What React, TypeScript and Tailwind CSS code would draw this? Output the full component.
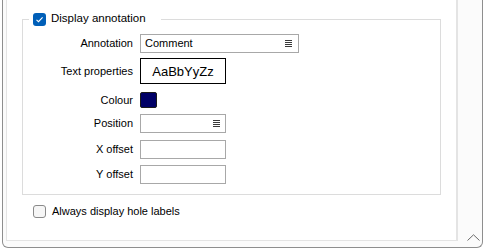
import React from "react";

function MenuIcon() {
  return (
    <svg width="7" height="7" viewBox="0 0 7 7" className="block">
      <path d="M0 0.5H7M0 2.5H7M0 4.5H7M0 6.5H7" stroke="#3a3a3a" strokeWidth="1" />
    </svg>
  );
}

function CheckBox({ checked }: { checked: boolean }) {
  if (checked) {
    return (
      <div className="w-[13px] h-[13px] rounded-[3px] bg-[#005fb8] flex items-center justify-center">
        <svg width="9" height="9" viewBox="0 0 9 9">
          <path d="M1.5 4.8L3.5 6.7L7.6 2.3" fill="none" stroke="white" strokeWidth="1.1" />
        </svg>
      </div>
    );
  }
  return <div className="w-[13px] h-[13px] rounded-[3px] border border-[#8a8a8a] bg-[#f6f6f6]" />;
}

function Row({ label, children, cls }: { label: string; children: React.ReactNode; cls: string }) {
  return (
    <div className={"flex items-center " + cls}>
      <div className="w-[110px] text-right">{label}</div>
      <div className="ml-[7px] flex items-center">{children}</div>
    </div>
  );
}

export default function App() {
  return (
    <div className="w-[485px] h-[249px] bg-white overflow-hidden font-['Liberation_Sans',Arial,sans-serif] text-[11px] text-black leading-none">
      <div className="ml-[2px] w-[481px] h-[248px] border-x border-b border-[#8e8e8e] rounded-b-[6px] flex pb-[6px] pl-[3px] bg-[#fbfbfb]">
        <div className="w-[452px] h-full border-l border-b border-r-[2px] border-[#e4e4e4] bg-white flex flex-col">
          <fieldset className="ml-[15px] mt-[12px] w-[419px] border border-[#dcdcdc] pb-[10px] pt-[8px]">
            <legend className="ml-[6px] pl-[4px] pr-[15px] h-[14px] flex items-center gap-[5px]">
              <CheckBox checked={true} />
              <span className="text-[11.5px]">Display annotation</span>
            </legend>
            <Row label="Annotation" cls="h-[19px]">
              <div className="w-[159px] h-[19px] border border-[#a8a8a8] flex items-center pl-[4px] pr-[6px] justify-between">
                <span>Comment</span>
                <MenuIcon />
              </div>
            </Row>
            <Row label="Text properties" cls="h-[26px] mt-[5px]">
              <div className="w-[86px] h-[26px] border border-black flex items-center justify-center text-[13px]">
                AaBbYyZz
              </div>
            </Row>
            <Row label="Colour" cls="h-[16px] mt-[8px]">
              <div className="w-[17px] h-[16px] rounded-[2px] border border-[#1a1a1a] bg-[#000066]" />
            </Row>
            <Row label="Position" cls="h-[19px] mt-[6px]">
              <div className="w-[86px] h-[19px] border border-[#a8a8a8] flex items-center justify-end pr-[5px]">
                <MenuIcon />
              </div>
            </Row>
            <Row label="X offset" cls="h-[19px] mt-[7px]">
              <div className="w-[86px] h-[19px] border border-[#a8a8a8]" />
            </Row>
            <Row label="Y offset" cls="h-[19px] mt-[6px]">
              <div className="w-[86px] h-[19px] border border-[#a8a8a8]" />
            </Row>
          </fieldset>
          <div className="ml-[26px] mt-[9px] flex items-center gap-[6px] h-[14px]">
            <CheckBox checked={false} />
            <span>Always display hole labels</span>
          </div>
        </div>
        <div className="w-[24px] flex items-end pl-[9px]">
          <svg width="13" height="7" viewBox="0 0 13 7" className="block">
            <path d="M0.5 6.5L6.5 0.8L12.5 6.5" fill="none" stroke="#6a6a6a" strokeWidth="1" />
          </svg>
        </div>
      </div>
    </div>
  );
}
